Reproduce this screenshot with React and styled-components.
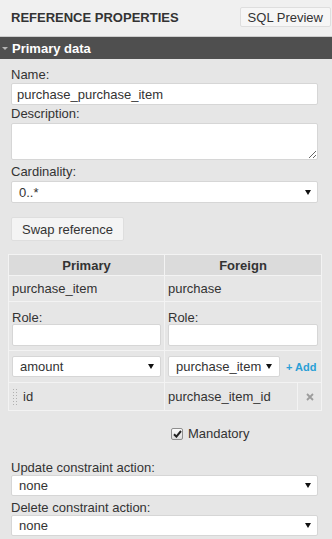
import React from 'react';
import styled, { createGlobalStyle } from 'styled-components';

const GlobalStyle = createGlobalStyle`
  html, body { margin: 0; padding: 0; }
  body {
    background: #e6e6e6;
    font-family: "Liberation Sans", Arial, sans-serif;
    font-size: 13px;
    color: #333;
  }
  * { box-sizing: border-box; }
`;

const Panel = styled.div`
  width: 332px;
  height: 539px;
  overflow: hidden;
  background: #e6e6e6;
  display: flex;
  flex-direction: column;
`;

const TopBar = styled.div`
  height: 37px;
  flex: none;
  background: #f0f0f0;
  border-bottom: 1px solid #cdcdcd;
  display: flex;
  align-items: center;
  justify-content: space-between;
  padding: 0 1px 2px 11px;
`;

const Title = styled.div`
  font-weight: bold;
  font-size: 13px;
  color: #333;
`;

const Button = styled.button`
  font-family: "Liberation Sans", Arial, sans-serif;
  font-size: 13px;
  color: #333;
  background: ${p => p.$bg || '#f6f6f6'};
  border: 1px solid #dedede;
  border-radius: 2px;
  height: ${p => p.$h || 20}px;
  padding: 0 ${p => p.$px || 6}px;
  margin: 0;
  cursor: pointer;
`;

const SectionBar = styled.div`
  height: 22px;
  flex: none;
  background: #4f4f4f;
  color: #fff;
  font-weight: bold;
  display: flex;
  align-items: center;
  gap: 4px;
  padding-left: 2px;
`;

const Form = styled.div`
  display: flex;
  flex-direction: column;
  align-items: stretch;
  padding: 8px 14px 0 11px;
`;

const Label = styled.label`
  display: block;
  line-height: ${p => p.$lh || 15}px;
  margin-top: ${p => p.$mt || 0}px;
  color: #333;
`;

const TextInput = styled.input`
  display: block;
  width: 100%;
  height: 22px;
  margin: ${p => p.$mt || 0}px 0 0;
  padding: 0 5px;
  border: 1px solid #d6d6d6;
  border-radius: 2px;
  background: #fff;
  font-family: "Liberation Sans", Arial, sans-serif;
  font-size: 13px;
  color: #333;
  outline: none;
`;

const TextArea = styled.textarea`
  display: block;
  width: 100%;
  height: 37px;
  margin: ${p => p.$mt || 0}px 0 0;
  padding: 3px 5px;
  border: 1px solid #d6d6d6;
  border-radius: 2px;
  background: #fff;
  font-family: "Liberation Sans", Arial, sans-serif;
  font-size: 13px;
  resize: both;
  outline: none;
`;

const SelectBox = styled.div`
  display: flex;
  align-items: center;
  justify-content: space-between;
  width: ${p => (p.$w ? `${p.$w}px` : '100%')};
  flex: none;
  height: ${p => p.$h || 22}px;
  margin-top: ${p => p.$mt || 0}px;
  padding: 0 ${p => p.$pr || 6}px 0 7px;
  background: #fff;
  border: 1px solid #d6d6d6;
  border-radius: 2px;
  color: #333;
  white-space: nowrap;
`;

const Arrow = () => (
  <svg width="6" height="5" viewBox="0 0 6 5">
    <polygon points="0,0 6,0 3,5" fill="#111" />
  </svg>
);

const Select = ({ value, ...rest }) => (
  <SelectBox {...rest}>
    <span>{value}</span>
    <Arrow />
  </SelectBox>
);

const ButtonRow = styled.div`
  display: flex;
  margin-top: ${p => p.$mt || 0}px;
`;

const Table = styled.table`
  border-collapse: collapse;
  table-layout: fixed;
  width: 313px;
  margin: 13px 0 0 -3px;
`;

const Row = styled.tr`
  height: ${p => p.$h}px;
`;

const HeadCell = styled.th`
  background: #dbdbdb;
  border: 1px solid #f3f3f3;
  font-weight: bold;
  text-align: center;
  padding: 0;
  color: #333;
`;

const Cell = styled.td`
  border: 1px solid #f3f3f3;
  padding: ${p => p.$pt || 0}px ${p => p.$px ?? 3}px 0;
  vertical-align: ${p => (p.$pt ? 'top' : 'middle')};
  text-align: ${p => p.$align || 'left'};
  color: #333;
  white-space: nowrap;
`;

const CellFlex = styled.div`
  display: flex;
  align-items: center;
  gap: ${p => p.$gap || 0}px;
`;

const AddLink = styled.a`
  color: #2a9fd6;
  font-weight: bold;
  font-size: 11px;
  text-decoration: none;
  cursor: pointer;
`;

const Handle = () => (
  <svg width="4" height="16" viewBox="0 0 4 16" style={{ marginLeft: 2, marginRight: 6 }}>
    {[0, 1, 2, 3, 4, 5].map(i => (
      <React.Fragment key={i}>
        <rect x="0" y={i * 3} width="1" height="1" fill="#b0b0b0" />
        <rect x="3" y={i * 3} width="1" height="1" fill="#b0b0b0" />
      </React.Fragment>
    ))}
  </svg>
);

const RemoveIcon = () => (
  <svg width="8" height="8" viewBox="0 0 8 8">
    <path d="M1 1 L7 7 M7 1 L1 7" stroke="#9c9c9c" strokeWidth="1.8" />
  </svg>
);

const CheckRow = styled.label`
  display: flex;
  align-items: center;
  gap: 5px;
  margin-top: 15px;
  padding-left: 160px;
  line-height: 15px;
`;

const CheckBox = styled.span`
  width: 12px;
  height: 12px;
  border: 1px solid #8e8e8e;
  border-radius: 2px;
  background: linear-gradient(#fcfcfc, #dcdcdc);
  display: flex;
  align-items: center;
  justify-content: center;
`;

export default function App() {
  return (
    <Panel>
      <GlobalStyle />
      <TopBar>
        <Title>REFERENCE PROPERTIES</Title>
        <Button $px={7}>SQL Preview</Button>
      </TopBar>
      <SectionBar>
        <svg width="6" height="3" viewBox="0 0 6 3">
          <polygon points="0,0 6,0 3,3" fill="#b5b5b5" />
        </svg>
        <span>Primary data</span>
      </SectionBar>
      <Form>
        <Label>Name:</Label>
        <TextInput $mt={1} defaultValue="purchase_purchase_item" />
        <Label $mt={1}>Description:</Label>
        <TextArea $mt={2} />
        <Label $mt={4}>Cardinality:</Label>
        <Select $mt={2} value="0..*" />
        <ButtonRow $mt={14}>
          <Button $h={24} $px={10} $bg="#f4f4f4">Swap reference</Button>
        </ButtonRow>
        <Table>
          <colgroup>
            <col style={{ width: 156 }} />
            <col style={{ width: 133 }} />
            <col style={{ width: 24 }} />
          </colgroup>
          <tbody>
            <Row $h={21}>
              <HeadCell>Primary</HeadCell>
              <HeadCell colSpan={2}>Foreign</HeadCell>
            </Row>
            <Row $h={26}>
              <Cell>purchase_item</Cell>
              <Cell colSpan={2}>purchase</Cell>
            </Row>
            <Row $h={49}>
              <Cell $pt={9}>
                <Label $lh={13}>Role:</Label>
                <TextInput />
              </Cell>
              <Cell colSpan={2} $pt={9}>
                <Label $lh={13}>Role:</Label>
                <TextInput />
              </Cell>
            </Row>
            <Row $h={32}>
              <Cell>
                <Select $h={21} value="amount" />
              </Cell>
              <Cell colSpan={2}>
                <CellFlex $gap={6}>
                  <Select $h={21} $w={112} $pr={7} value="purchase_item" />
                  <AddLink>+ Add</AddLink>
                </CellFlex>
              </Cell>
            </Row>
            <Row $h={28}>
              <Cell $px={2}>
                <CellFlex>
                  <Handle />
                  <span>id</span>
                </CellFlex>
              </Cell>
              <Cell>purchase_item_id</Cell>
              <Cell $px={0} $align="center">
                <RemoveIcon />
              </Cell>
            </Row>
          </tbody>
        </Table>
        <CheckRow>
          <CheckBox>
            <svg width="9" height="8" viewBox="0 0 9 8">
              <path d="M1 4.2 L3.4 6.6 L8 1" stroke="#222" strokeWidth="2" fill="none" />
            </svg>
          </CheckBox>
          <span>Mandatory</span>
        </CheckRow>
        <Label $mt={19}>Update constraint action:</Label>
        <Select $h={21} value="none" />
        <Label $mt={4}>Delete constraint action:</Label>
        <Select $h={21} value="none" />
      </Form>
    </Panel>
  );
}
